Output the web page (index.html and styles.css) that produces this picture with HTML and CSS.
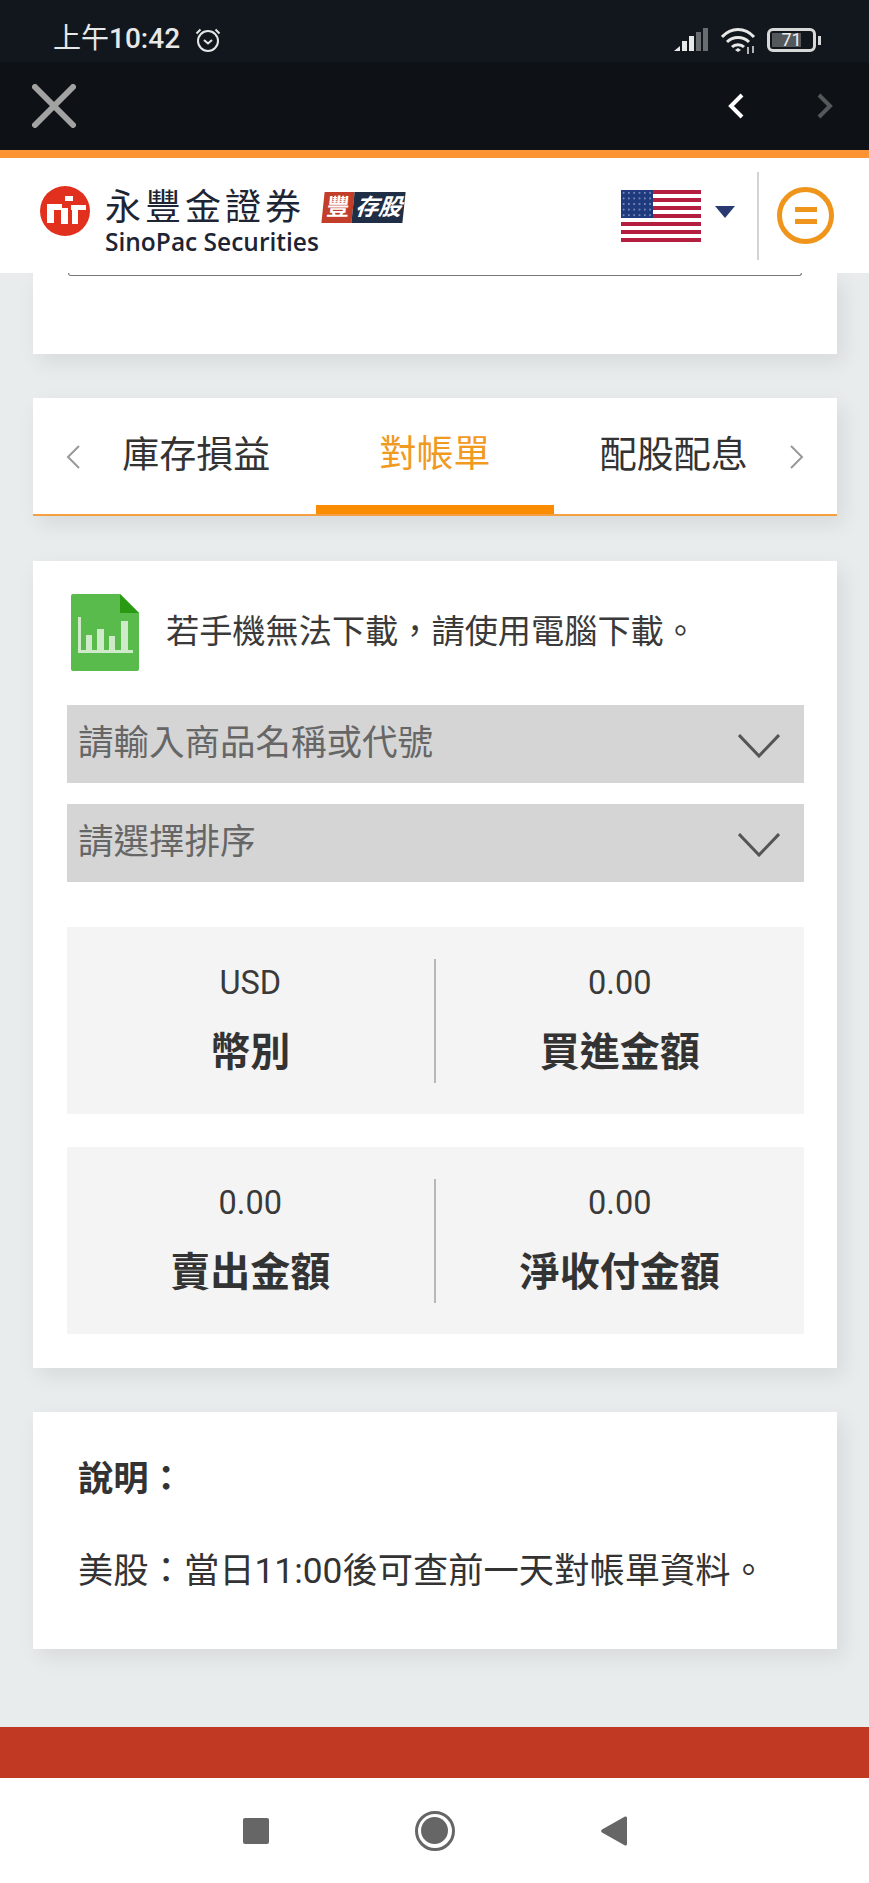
FILE: index.html
```html
<!DOCTYPE html>
<html lang="zh-Hant">
<head>
  <meta charset="UTF-8" />
  <meta name="viewport" content="width=device-width, initial-scale=1.0"/>
  <title>對帳單</title>
  <link rel="stylesheet" href="styles.css">
</head>
<body>
  <div class="status-bar">
    <div class="status-left">
      <span class="clock">上午<b>10:42</b></span>
      <svg class="alarm" width="28" height="28" viewBox="0 0 28 28" fill="none" stroke="#e4e6e8" stroke-width="2">
        <circle cx="14" cy="15" r="10"/>
        <path d="M10 14l4 3.5 4-3.5"/>
        <path d="M2.5 7.5l4-4M25.500 7.500l-4-4"/>
      </svg>
    </div>
    <div class="status-right">
      <svg width="34" height="24" viewBox="0 0 34 24">
        <path d="M0 23l6-5v5z" fill="#e8e8e8"/>
        <rect x="8" y="13" width="5" height="10" fill="#e8e8e8"/>
        <rect x="15" y="8" width="5" height="15" fill="#e8e8e8"/>
        <rect x="22" y="4" width="5" height="19" fill="#6a6d70"/>
        <rect x="29" y="0" width="5" height="23" fill="#6a6d70"/>
      </svg>
      <svg width="36" height="27" viewBox="0 0 36 27" fill="none" stroke="#e8e8e8" stroke-width="3">
        <path d="M1 9c9-10 23-10 32 0"/>
        <path d="M6 14c6-6 16-6 22 0"/>
        <path d="M11 19c3-3 9-3 12 0"/>
        <path d="M14 22l3-2 3 2-3 2z" fill="#e8e8e8" stroke="none"/>
        <path d="M27 19v7M32 18v7" stroke-width="1.500"/>
      </svg>
      <div class="battery">
        <div class="battery-body"><span class="battery-fill"></span><span class="battery-num">71</span></div>
        <span class="battery-nub"></span>
      </div>
    </div>
  </div>

  <div class="nav-bar">
    <svg width="44" height="44" viewBox="0 0 44 44" stroke="#a2a2a2" stroke-width="6" stroke-linecap="round">
      <path d="M3 3l38 38M41 3L3 41"/>
    </svg>
    <div class="nav-arrows">
      <svg width="16" height="26" viewBox="0 0 16 26" fill="none" stroke="#fff" stroke-width="4">
        <path d="M14 2L3 13l11 11"/>
      </svg>
      <svg width="16" height="26" viewBox="0 0 16 26" fill="none" stroke="#55585a" stroke-width="4">
        <path d="M2 2l11 11L2 24"/>
      </svg>
    </div>
  </div>

  <header class="site-header">
    <div class="logo">
      <svg class="logo-mark" width="50" height="50" viewBox="0 0 50 50">
        <circle cx="25" cy="25" r="25" fill="#e1301e"/>
        <g fill="#fff">
          <rect x="25" y="10" width="8" height="5"/>
          <path d="M7 18h15v4h6v16h-7V24h-7v13H7z"/>
          <path d="M31 19h15v5h-8v14h-6V24h-1z"/>
        </g>
      </svg>
      <div class="logo-text">
        <div class="logo-top">
          <span class="logo-zh">永豐金證券</span>
          <span class="logo-badge"><span class="badge-red">豐</span><span class="badge-navy">存股</span></span>
        </div>
        <div class="logo-en">SinoPac Securities</div>
      </div>
    </div>
    <div class="header-right">
      <svg class="flag" width="80" height="52" viewBox="0 0 80 52">
        <defs>
          <pattern id="stars" width="5.300" height="5.600" patternUnits="userSpaceOnUse">
            <circle cx="2.600" cy="2.800" r="0.900" fill="#8fa0cc"/>
          </pattern>
        </defs>
        <rect width="80" height="52" fill="#fff"/>
        <g fill="#b41f3f">
          <rect y="0" width="80" height="4"/>
          <rect y="8" width="80" height="4"/>
          <rect y="16" width="80" height="4"/>
          <rect y="24" width="80" height="4"/>
          <rect y="32" width="80" height="4"/>
          <rect y="40" width="80" height="4"/>
          <rect y="48" width="80" height="4"/>
        </g>
        <rect width="32" height="28" fill="#1f3a7d"/>
        <rect width="32" height="28" fill="url(#stars)"/>
      </svg>
      <span class="caret"></span>
      <span class="header-divider"></span>
      <span class="menu-btn"><span class="menu-bars"></span></span>
    </div>
  </header>

  <main class="content">
    <section class="card card-cut">
      <div class="cut-input"></div>
    </section>

    <section class="card tabs">
      <svg class="tab-arrow tab-arrow-left" width="14" height="24" viewBox="0 0 14 24" fill="none" stroke="#999" stroke-width="2">
        <path d="M13 1L2 12l11 11"/>
      </svg>
      <div class="tab">庫存損益</div>
      <div class="tab active">對帳單</div>
      <div class="tab">配股配息</div>
      <svg class="tab-arrow tab-arrow-right" width="14" height="24" viewBox="0 0 14 24" fill="none" stroke="#999" stroke-width="2">
        <path d="M1 1l11 11L1 23"/>
      </svg>
    </section>

    <section class="card statement">
      <div class="notice">
        <svg width="68" height="77" viewBox="0 0 68 77">
          <path d="M2 0h47l19 19v56a2 2 0 0 1-2 2H2a2 2 0 0 1-2-2V2a2 2 0 0 1 2-2z" fill="#58bb4c"/>
          <path d="M49 0l19 19H49z" fill="#2a9a12"/>
          <g fill="#cfeac9">
            <rect x="7" y="23" width="3" height="36"/>
            <rect x="7" y="56" width="55" height="3"/>
            <rect x="15" y="41" width="6" height="15"/>
            <rect x="26" y="35" width="7" height="21"/>
            <rect x="38" y="42" width="6" height="14"/>
            <rect x="50" y="27" width="7" height="29"/>
          </g>
        </svg>
        <span>若手機無法下載，請使用電腦下載。</span>
      </div>

      <div class="select">
        <span>請輸入商品名稱或代號</span>
        <svg width="42" height="24" viewBox="0 0 42 24" fill="none" stroke="#555" stroke-width="3">
          <path d="M1 1l20 21L41 1"/>
        </svg>
      </div>
      <div class="select">
        <span>請選擇排序</span>
        <svg width="42" height="24" viewBox="0 0 42 24" fill="none" stroke="#555" stroke-width="3">
          <path d="M1 1l20 21L41 1"/>
        </svg>
      </div>

      <div class="summary">
        <div class="cell">
          <div class="value">USD</div>
          <div class="label">幣別</div>
        </div>
        <div class="cell">
          <div class="value">0.00</div>
          <div class="label">買進金額</div>
        </div>
      </div>
      <div class="summary">
        <div class="cell">
          <div class="value">0.00</div>
          <div class="label">賣出金額</div>
        </div>
        <div class="cell">
          <div class="value">0.00</div>
          <div class="label">淨收付金額</div>
        </div>
      </div>
    </section>

    <section class="card note">
      <h2>說明：</h2>
      <p>美股：當日11:00後可查前一天對帳單資料。</p>
    </section>
  </main>

  <div class="red-band"></div>

  <div class="system-nav">
    <span class="sys-square"></span>
    <span class="sys-circle"><span class="sys-dot"></span></span>
    <svg width="26" height="30" viewBox="0 0 26 30">
      <path d="M24 0.500a1.500 1.500 0 0 1 2 1.500v26a1.500 1.500 0 0 1-2 1.500L1 16.500a2 2 0 0 1 0-3z" fill="#666"/>
    </svg>
  </div>
</body>
</html>
```

FILE: styles.css
```css
* {
  box-sizing: border-box;
}

body {
  margin: 0;
  height: 100vh;
  display: flex;
  flex-direction: column;
  overflow: hidden;
  background-color: #e8ecec;
  color: #333;
  font-family: Roboto, "Noto Sans CJK TC", sans-serif;
}

/* phone chrome */
.status-bar {
  height: 62px;
  padding: 16px 48px 0 53px;
  display: flex;
  justify-content: space-between;
  align-items: flex-start;
  background-color: #11171c;
}

.status-left {
  display: flex;
  align-items: center;
  gap: 14px;
  height: 46px;
}

.clock {
  color: #e8e8e8;
  font-size: 28px;
  line-height: 46px;
}

.clock b {
  font-weight: 500;
}

.alarm {
  margin-top: 2px;
}

.status-right {
  display: flex;
  align-items: flex-start;
  gap: 13px;
  margin-top: 12px;
}

.battery {
  display: flex;
  align-items: center;
  gap: 2px;
  margin-left: -3px;
}

.battery-body {
  position: relative;
  width: 49px;
  height: 24px;
  border: 3px solid #d8d8d8;
  border-radius: 6px;
  display: flex;
  align-items: center;
  justify-content: center;
}

.battery-fill {
  position: absolute;
  left: 2px;
  top: 2px;
  bottom: 2px;
  width: 29px;
  background-color: #55585b;
}

.battery-num {
  position: relative;
  color: #eee;
  font-size: 18px;
  line-height: 18px;
}

.battery-nub {
  width: 3px;
  height: 9px;
  background-color: #d8d8d8;
}

.nav-bar {
  height: 88px;
  padding: 22px 36px 0 32px;
  display: flex;
  justify-content: space-between;
  align-items: flex-start;
  background-color: #0e1216;
}

.nav-arrows {
  display: flex;
  gap: 73px;
  margin-top: 9px;
}

/* site header */
.site-header {
  height: 123px;
  padding-right: 35px;
  display: flex;
  justify-content: space-between;
  align-items: center;
  background-color: #fff;
  border-top: 8px solid #fc9433;
  position: relative;
  z-index: 1;
}

.logo {
  display: flex;
  align-items: center;
  margin-left: 40px;
}

.logo-mark {
  margin-right: 15px;
  margin-top: -10px;
}

.logo-text {
  margin-top: 13px;
}

.logo-top {
  display: flex;
  align-items: center;
  height: 36px;
}

.logo-zh {
  color: #1d2433;
  font-size: 36px;
  line-height: 36px;
  letter-spacing: 4px;
}

.logo-badge {
  display: flex;
  margin-left: 18px;
  transform: skewX(-6deg);
  font-size: 23px;
  line-height: 31px;
  font-weight: 700;
  color: #fff;
}

.badge-red {
  width: 30px;
  text-align: center;
  background-color: #c23d2a;
}

.badge-navy {
  width: 51px;
  text-align: center;
  background-color: #1f2d45;
  font-style: italic;
}

.logo-en {
  margin-top: 2px;
  color: #1d2433;
  font-family: "Open Sans", sans-serif;
  font-size: 24.500px;
  line-height: 27px;
  font-weight: 600;
  white-space: nowrap;
}

.header-right {
  display: flex;
  align-items: center;
}

.flag {
  margin-top: 1px;
}

.caret {
  width: 0;
  height: 0;
  margin-left: 14px;
  margin-top: -8px;
  border-left: 10px solid transparent;
  border-right: 10px solid transparent;
  border-top: 12px solid #2a3a70;
}

.header-divider {
  width: 2px;
  height: 88px;
  margin: 0 18px 0 22px;
  background-color: #d4d4d4;
}

.menu-btn {
  width: 57px;
  height: 57px;
  border: 5px solid #f0951c;
  border-radius: 50%;
  display: flex;
  align-items: center;
  justify-content: center;
}

.menu-bars {
  width: 22px;
  height: 17px;
  border-top: 5px solid #f0951c;
  border-bottom: 5px solid #f0951c;
}

/* page */
.content {
  flex: 1;
  padding: 0 32px 0 33px;
  display: flex;
  flex-direction: column;
  min-height: 0;
}

.card {
  background-color: #fff;
  box-shadow: 6px 8px 20px rgba(0, 0, 0, 0.08);
}

.card-cut {
  height: 81px;
  margin-bottom: 44px;
  padding: 0 35px;
}

.cut-input {
  height: 3px;
  border: 1px solid #777;
  border-top: none;
  border-radius: 0 0 6px 6px;
}

.tabs {
  height: 118px;
  margin-bottom: 45px;
  padding: 0 44px;
  display: flex;
  position: relative;
  border-bottom: 2px solid #f5a040;
}

.tab-arrow {
  position: absolute;
  top: 47px;
}

.tab-arrow-left {
  left: 33px;
}

.tab-arrow-right {
  right: 33px;
}

.tab {
  flex: 1;
  height: 116px;
  color: #333;
  font-size: 37px;
  line-height: 116px;
  text-align: center;
}

.tab.active {
  color: #f09a1f;
  line-height: 114px;
  border-bottom: 9px solid #fb8c00;
}

.statement {
  height: 807px;
  margin-bottom: 44px;
  padding: 33px 33px 0 34px;
}

.notice {
  display: flex;
  align-items: center;
  gap: 27px;
  height: 77px;
  margin-bottom: 34px;
  padding-left: 4px;
  font-size: 33.200px;
  color: #3a3a3a;
}

.notice span {
  margin-bottom: 8px;
}

.select {
  height: 77.500px;
  margin-bottom: 21.500px;
  padding: 0 24px 0 11px;
  display: flex;
  justify-content: space-between;
  align-items: center;
  background-color: #d5d5d5;
  color: #666;
  font-size: 35.500px;
}

.select span {
  margin-bottom: 8px;
}

.select svg {
  margin-top: 5px;
}

.summary {
  display: grid;
  grid-template-columns: 1fr 1fr;
  height: 186.500px;
  margin-top: 33.500px;
  padding: 32px 0;
  background-color: #f4f4f4;
}

.select + .summary {
  margin-top: 45.500px;
}

.cell {
  text-align: center;
}

.cell:first-child {
  border-right: 2px solid #b8b8b8;
}

.value {
  margin-top: 4px;
  font-size: 32.500px;
  line-height: 40px;
  color: #3a3a3a;
}

.label {
  margin-top: 20px;
  font-size: 40px;
  line-height: 60px;
  font-weight: 700;
  color: #333;
}

.note {
  height: 237px;
  padding: 35px 45px 0;
}

.note h2 {
  margin: 0;
  font-size: 35.300px;
  line-height: 64px;
  font-weight: 700;
}

.note p {
  margin: 28px 0 0;
  font-size: 35.300px;
  line-height: 64px;
  white-space: nowrap;
}

.red-band {
  height: 51px;
  margin-bottom: 0;
  background-color: #c13823;
}

.system-nav {
  height: 105px;
  display: flex;
  justify-content: center;
  align-items: center;
  gap: 146px;
  background-color: #fff;
}

.sys-square {
  width: 26px;
  height: 26px;
  border-radius: 2px;
  background-color: #666;
}

.sys-circle {
  width: 40px;
  height: 40px;
  border: 3px solid #666;
  border-radius: 50%;
  display: flex;
  align-items: center;
  justify-content: center;
}

.sys-dot {
  width: 27px;
  height: 27px;
  border-radius: 50%;
  background-color: #666;
}
```
